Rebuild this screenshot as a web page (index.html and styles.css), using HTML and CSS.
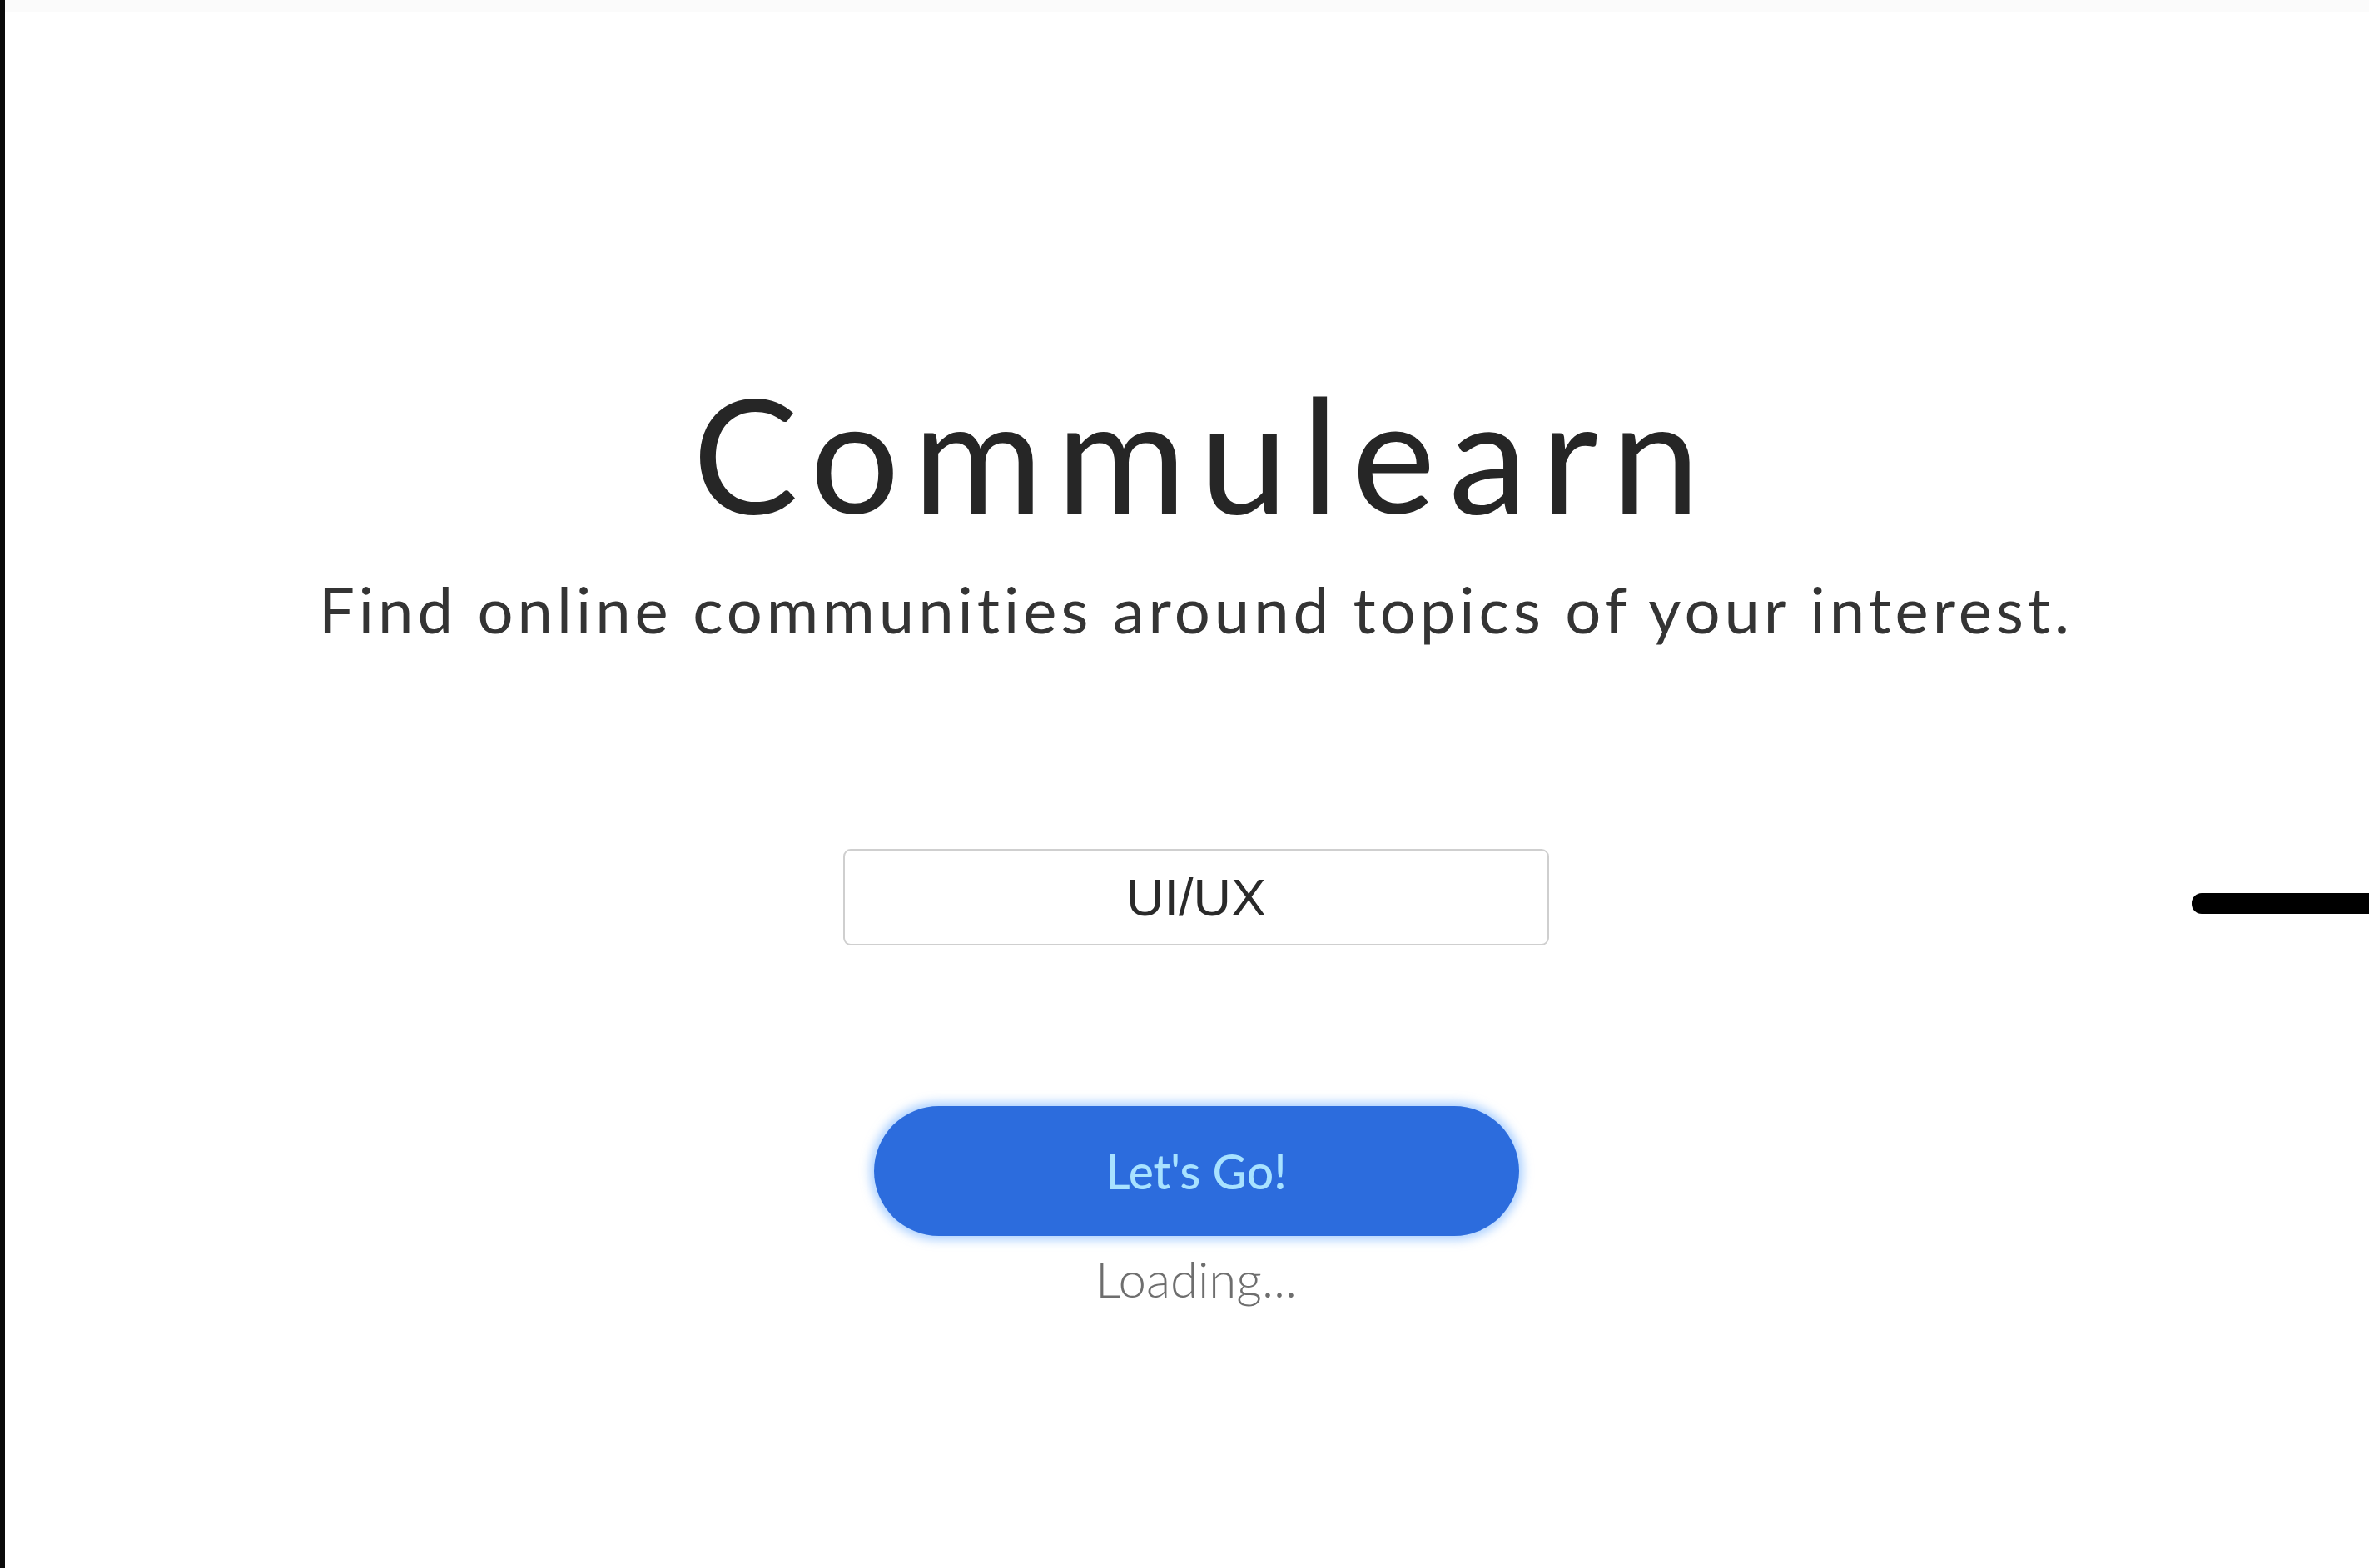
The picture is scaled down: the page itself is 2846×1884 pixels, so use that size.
FILE: index.html
```html
<!DOCTYPE html>
<html lang="en">
<head>
<meta charset="utf-8">
<title>Commulearn</title>
<link rel="stylesheet" href="styles.css">
</head>
<body>
<div class="page">
  <div class="topband"></div>
  <main class="hero">
    <h1 class="title">Commulearn</h1>
    <p class="subtitle">Find online communities around topics of your interest.</p>
    <input class="topic" type="text" value="UI/UX">
    <button class="go" type="button">Let's Go!</button>
    <p class="loading">Loading...</p>
  </main>
  <div class="slider-line"></div>
</div>
</body>
</html>
```
FILE: styles.css
```css
html, body {
  margin: 0;
  padding: 0;
  background: #ffffff;
}
.page {
  position: relative;
  min-height: 1884px;
  box-sizing: border-box;
  border-left: 6px solid #0a0a0a;
  overflow: hidden;
  font-family: "Lato", "Open Sans", sans-serif;
  font-variant-ligatures: none;
}
.topband {
  height: 14px;
  background: #fbfbfb;
}
.hero {
  display: flex;
  flex-direction: column;
  align-items: center;
  padding-top: 434px;
  padding-left: 22px;
}
.title {
  margin: 0;
  font-size: 190px;
  line-height: 1;
  font-weight: 400;
  color: #262626;
  letter-spacing: 16px;
  text-indent: 16px;
}
.subtitle {
  margin: 56px 0 0 0;
  font-size: 76px;
  line-height: 1;
  font-weight: 400;
  color: #343434;
  letter-spacing: 5px;
}
.topic {
  margin-top: 250px;
  width: 848px;
  height: 116px;
  box-sizing: border-box;
  border: 2px solid #cfcfcf;
  border-radius: 9px;
  background: #fff;
  text-align: center;
  font-family: "Liberation Sans", Arial, sans-serif;
  font-size: 63px;
  color: #2a2a2a;
  outline: none;
}
.go {
  margin-top: 193px;
  width: 775px;
  height: 156px;
  border: none;
  border-radius: 78px;
  background: #2c6cdd;
  box-shadow: 0 0 12px 5px rgba(120, 180, 255, 0.6);
  color: #a8e2ff;
  font-family: "Lato", "Open Sans", sans-serif;
  font-size: 57px;
  font-weight: 500;
}
.loading {
  margin: 15px 0 0 0;
  font-size: 60px;
  line-height: 1.2;
  font-weight: 300;
  color: #6e6e6e;
}
.slider-line {
  position: absolute;
  left: 2627px;
  top: 1073px;
  width: 260px;
  height: 25px;
  border-radius: 12px;
  background: #000;
}
```
